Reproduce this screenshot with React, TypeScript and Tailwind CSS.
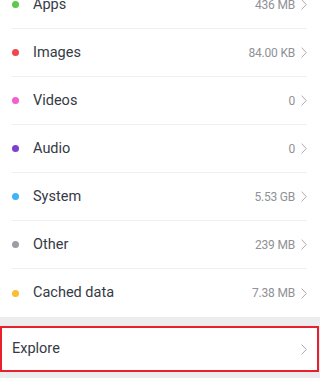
import React from "react";

const items = [
  { label: "Apps", value: "436 MB", color: "bg-[#5bc94a]" },
  { label: "Images", value: "84.00 KB", color: "bg-[#f0474f]" },
  { label: "Videos", value: "0", color: "bg-[#f35fcf]" },
  { label: "Audio", value: "0", color: "bg-[#7c3fd0]" },
  { label: "System", value: "5.53 GB", color: "bg-[#3fb3f7]" },
  { label: "Other", value: "239 MB", color: "bg-[#9c9ea6]" },
  { label: "Cached data", value: "7.38 MB", color: "bg-[#fbbd31]" },
];

function Chevron() {
  return (
    <svg width="6" height="11" viewBox="0 0 6 11" fill="none" className="shrink-0">
      <path d="M0.6 0.6 L5.3 5.5 L0.6 10.4" stroke="#a9abb1" strokeWidth="1" />
    </svg>
  );
}

export default function App() {
  return (
    <div
      className="w-[320px] h-[378px] overflow-hidden bg-[#ececee]"
      style={{ fontFamily: "Roboto, 'Noto Sans', sans-serif" }}
    >
      <div className="bg-white -mt-[19px] pl-[12px] pr-[13px]">
        {items.map((it, i) => (
          <div
            key={it.label}
            className={
              "flex items-center h-[48px] " +
              (i < items.length - 1 ? "border-b border-[#efeff1]" : "")
            }
          >
            <span className={"w-[7px] h-[7px] rounded-full " + it.color} />
            <span className="ml-[14px] text-[14.5px] text-[#353a45] flex-1">{it.label}</span>
            <span className="text-[12px] tracking-[-0.2px] text-[#8f9196] mr-[6px]">{it.value}</span>
            <Chevron />
          </div>
        ))}
      </div>
      <div className="h-[9px]" />
      <div className="w-[319px] h-[46px] bg-white border-2 border-[#e8202c] flex items-center pl-[10px] pr-[10px]">
        <span className="flex-1 text-[14.5px] text-[#353a45]">Explore</span>
        <Chevron />
      </div>
    </div>
  );
}
